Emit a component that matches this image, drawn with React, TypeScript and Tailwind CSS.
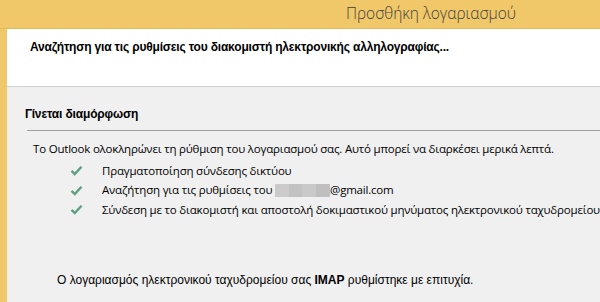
import React from "react";

const Check = () => (
  <svg width="13" height="11" viewBox="0 0 13 11" className="shrink-0">
    <path d="M1.5 5.8 L4.8 9 L11.5 1.8" fill="none" stroke="#5e9f80" strokeWidth="2.4" strokeLinecap="butt" strokeLinejoin="miter" />
  </svg>
);

export default function App() {
  const seg = { fontFamily: '"Open Sans", "Noto Sans", sans-serif' };
  const tah = { fontFamily: '"Liberation Sans", Arial, sans-serif' };
  return (
    <div className="w-[600px] h-[302px] bg-[#f0c869] flex flex-col overflow-hidden">
      <div className="h-[29px] shrink-0 flex items-center pl-[346px] border-b border-[#e3b957]">
        <span className="text-[15.5px] text-[#3f3f3f] font-light leading-none" style={seg}>
          Προσθήκη λογαριασμού
        </span>
      </div>
      <div className="flex-1 flex pl-[7px]">
        <div className="flex-1 flex flex-col">
          <div className="h-[58px] bg-white border-b border-[#d0d0d0] pl-[23px] pt-[9px]">
            <div className="text-[12px] font-bold text-black tracking-[-0.18px]" style={tah}>
              Αναζήτηση για τις ρυθμίσεις του διακομιστή ηλεκτρονικής αλληλογραφίας...
            </div>
          </div>
          <div className="flex-1 bg-[#f0f0f0] flex flex-col">
            <div className="pl-[18px] pt-[18px] text-[12px] font-bold text-black tracking-[-0.15px]" style={tah}>
              Γίνεται διαμόρφωση
            </div>
            <div className="ml-[20px] mt-[7px] h-[1px] bg-[#a0a0a0]" />
            <div className="pl-[26px] mt-[10px] text-[11.5px] tracking-[-0.2px] text-black leading-[16px]" style={seg}>
              Το Outlook ολοκληρώνει τη ρύθμιση του λογαριασμού σας. Αυτό μπορεί να διαρκέσει μερικά λεπτά.
            </div>
            <div className="pl-[63px] mt-[4px] flex flex-col text-[11.5px] tracking-[-0.2px] text-black" style={seg}>
              <div className="h-[19px] flex items-center gap-[19px]">
                <Check />
                <span className="whitespace-nowrap">Πραγματοποίηση σύνδεσης δικτύου</span>
              </div>
              <div className="h-[20px] flex items-center gap-[19px]">
                <Check />
                <span className="whitespace-nowrap flex items-center">
                  Αναζήτηση για τις ρυθμίσεις του&nbsp;
                  <span className="inline-flex h-[13px] w-[55px]">
                    <span className="w-[14px] bg-[#cbcbcb]" />
                    <span className="w-[13px] bg-[#c2c2c2]" />
                    <span className="w-[14px] bg-[#c9c9c9]" />
                    <span className="w-[14px] bg-[#bfbfbf]" />
                  </span>
                  @gmail.com
                </span>
              </div>
              <div className="h-[19px] flex items-center gap-[19px]">
                <Check />
                <span className="whitespace-nowrap">
                  Σύνδεση με το διακομιστή και αποστολή δοκιμαστικού μηνύματος ηλεκτρονικού ταχυδρομείου
                </span>
              </div>
            </div>
            <div className="pl-[50px] mt-[52px] text-[12px] text-black" style={tah}>
              Ο λογαριασμός ηλεκτρονικού ταχυδρομείου σας <b>IMAP</b> ρυθμίστηκε με επιτυχία.
            </div>
          </div>
        </div>
      </div>
    </div>
  );
}
